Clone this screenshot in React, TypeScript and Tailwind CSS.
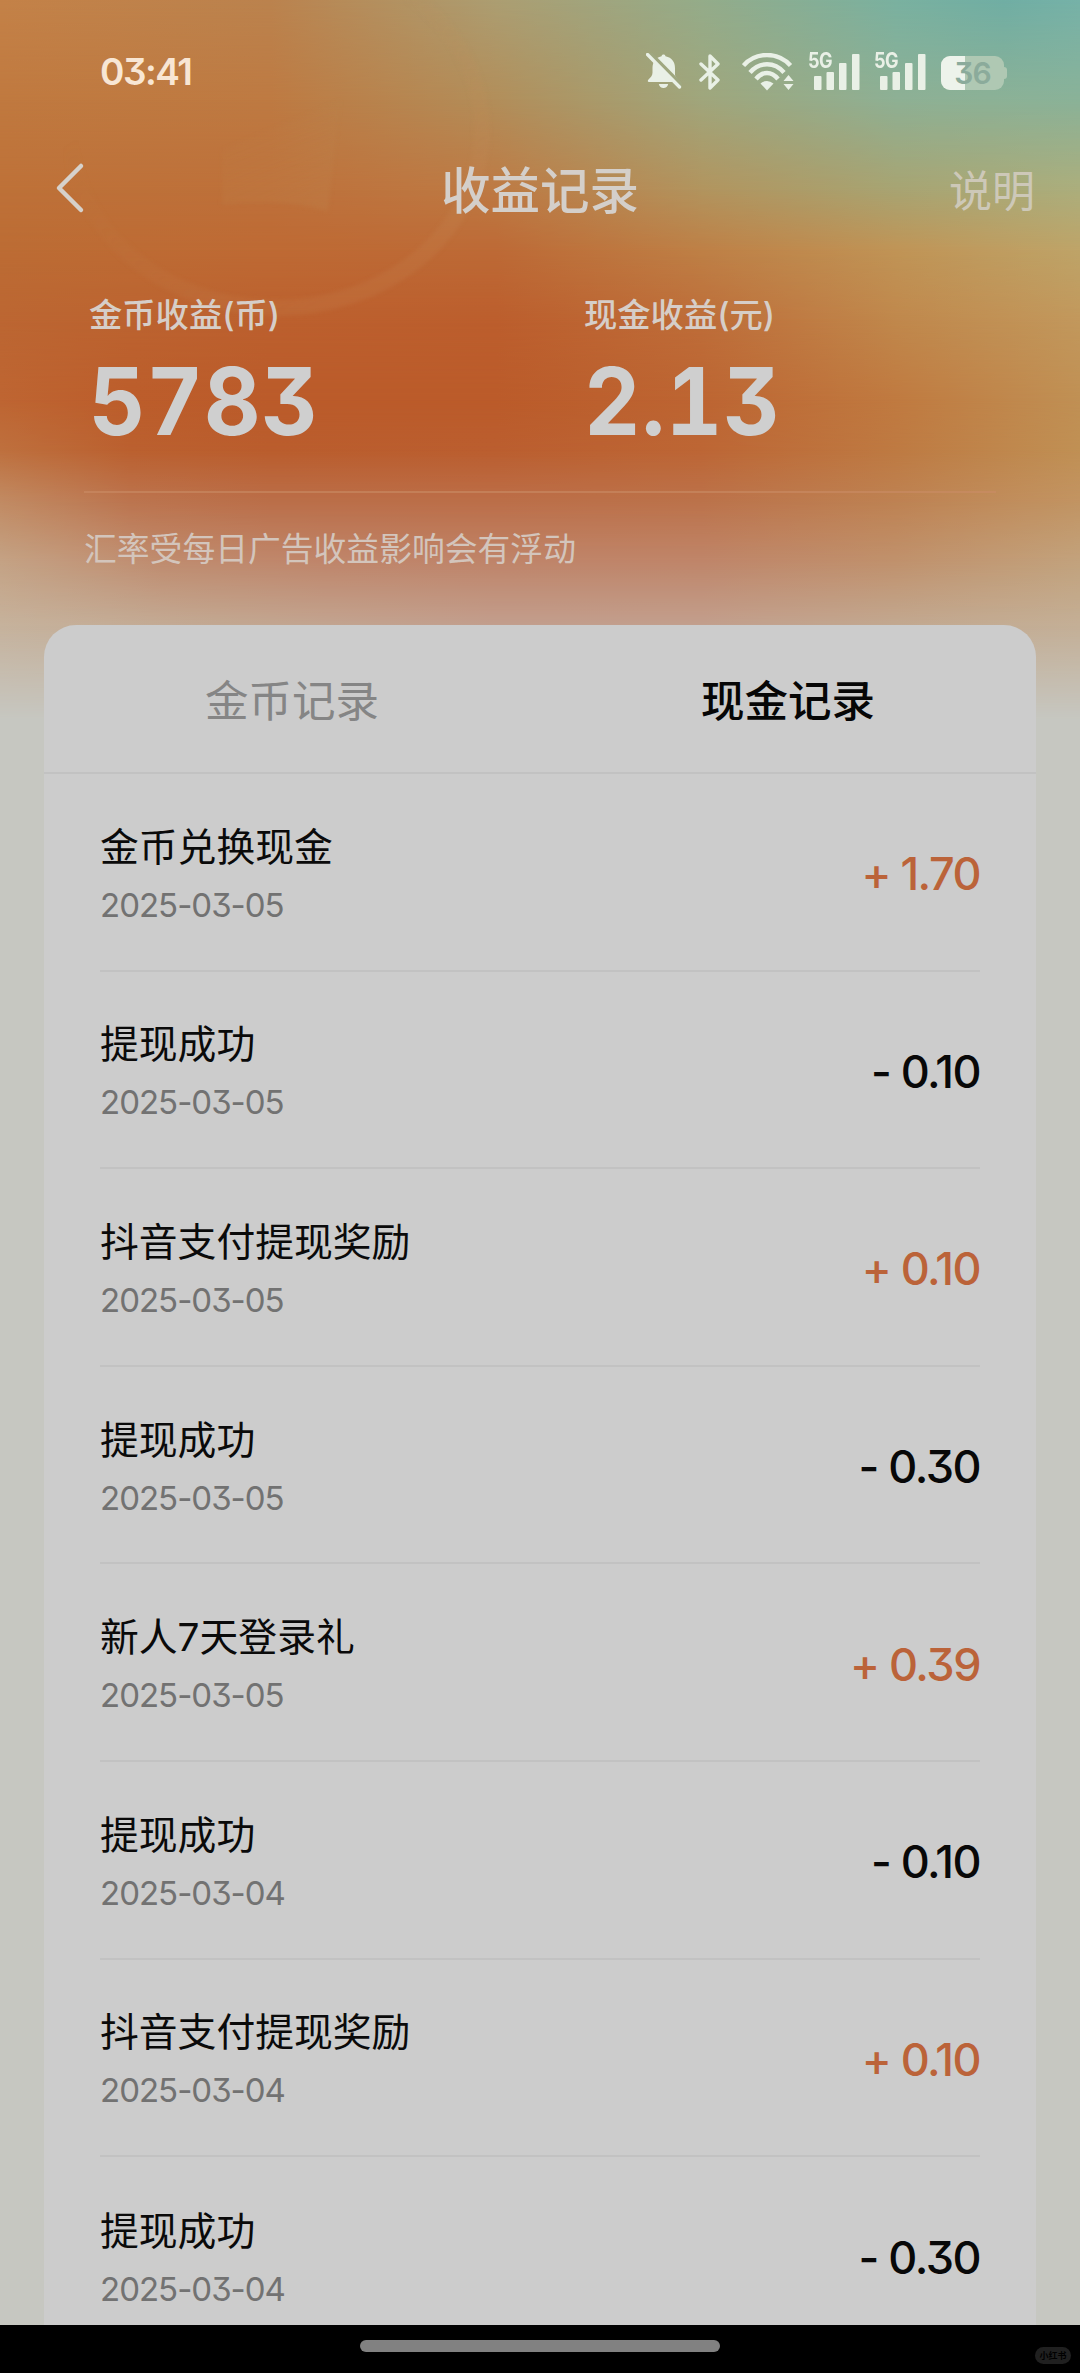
import React from "react";

type RecordItem = { title: string; date: string; amount: string };

const records: RecordItem[] = [
  { title: "金币兑换现金", date: "2025-03-05", amount: "+ 1.70" },
  { title: "提现成功", date: "2025-03-05", amount: "- 0.10" },
  { title: "抖音支付提现奖励", date: "2025-03-05", amount: "+ 0.10" },
  { title: "提现成功", date: "2025-03-05", amount: "- 0.30" },
  { title: "新人7天登录礼", date: "2025-03-05", amount: "+ 0.39" },
  { title: "提现成功", date: "2025-03-04", amount: "- 0.10" },
  { title: "抖音支付提现奖励", date: "2025-03-04", amount: "+ 0.10" },
  { title: "提现成功", date: "2025-03-04", amount: "- 0.30" },
];

// Stacked horizontal gradients, each faded in vertically over the one before it.
const meshLayers: string[] = [
  "bg-[linear-gradient(90deg,rgb(196,130,72)_0%,rgb(187,131,78)_25%,rgb(172,158,114)_46%,rgb(148,172,138)_65%,rgb(122,177,160)_83%,rgb(112,174,164)_93%,rgb(118,178,168)_100%)]",
  "bg-[linear-gradient(90deg,rgb(192,121,63)_0%,rgb(190,122,66)_25%,rgb(178,142,90)_46%,rgb(160,166,124)_65%,rgb(142,176,148)_83%,rgb(138,178,152)_100%)] [mask-image:linear-gradient(180deg,transparent_0px,black_100px)]",
  "bg-[linear-gradient(90deg,rgb(190,113,56)_0%,rgb(190,112,58)_25%,rgb(190,122,68)_46%,rgb(178,148,94)_65%,rgb(168,164,114)_83%,rgb(172,174,124)_100%)] [mask-image:linear-gradient(180deg,transparent_100px,black_190px)]",
  "bg-[linear-gradient(90deg,rgb(188,108,52)_0%,rgb(190,106,52)_25%,rgb(189,106,54)_46%,rgb(190,128,70)_65%,rgb(192,148,86)_83%,rgb(190,164,104)_100%)] [mask-image:linear-gradient(180deg,transparent_190px,black_250px)]",
  "bg-[linear-gradient(90deg,rgb(188,102,50)_0%,rgb(188,96,46)_25%,rgb(188,94,45)_46%,rgb(190,109,57)_65%,rgb(192,136,76)_83%,rgb(194,152,92)_100%)] [mask-image:linear-gradient(180deg,transparent_250px,black_320px)]",
  "bg-[linear-gradient(90deg,rgb(190,101,50)_0%,rgb(188,93,43)_12%,rgb(187,91,42)_25%,rgb(187,91,42)_46%,rgb(189,101,50)_65%,rgb(192,122,64)_83%,rgb(192,144,84)_100%)] [mask-image:linear-gradient(180deg,transparent_320px,black_400px)]",
  "bg-[linear-gradient(90deg,rgb(190,112,62)_0%,rgb(187,96,47)_12%,rgb(186,93,45)_25%,rgb(187,94,47)_46%,rgb(189,102,53)_65%,rgb(190,122,66)_83%,rgb(192,144,84)_100%)] [mask-image:linear-gradient(180deg,transparent_400px,black_450px)]",
  "bg-[linear-gradient(90deg,rgb(193,138,98)_0%,rgb(188,116,78)_12%,rgb(187,110,72)_25%,rgb(188,110,72)_46%,rgb(188,114,74)_65%,rgb(190,130,82)_83%,rgb(194,148,98)_100%)] [mask-image:linear-gradient(180deg,transparent_450px,black_500px)]",
  "bg-[linear-gradient(90deg,rgb(196,162,132)_0%,rgb(191,139,110)_15%,rgb(191,133,106)_30%,rgb(191,132,105)_46%,rgb(191,133,105)_65%,rgb(192,145,108)_83%,rgb(194,162,124)_100%)] [mask-image:linear-gradient(180deg,transparent_500px,black_560px)]",
  "bg-[linear-gradient(90deg,rgb(198,178,156)_0%,rgb(194,168,146)_20%,rgb(194,158,141)_46%,rgb(194,159,141)_65%,rgb(194,168,144)_83%,rgb(196,175,150)_100%)] [mask-image:linear-gradient(180deg,transparent_560px,black_625px)]",
  "bg-[#c6c7c1] [mask-image:linear-gradient(180deg,transparent_625px,black_720px)]",
];

function MeshBackdrop() {
  return (
    <div className="absolute inset-0 bg-[#c6c7c1]">
      {meshLayers.map((layer, i) => (
        <div key={i} className={"absolute inset-x-0 top-0 h-[760px] " + layer} />
      ))}
      <svg className="absolute left-0 top-0 blur-[2px]" width="560" height="360" viewBox="0 0 560 360" fill="none">
        <defs>
          <linearGradient id="coin" x1="0.3" y1="0.3" x2="0.75" y2="0.9">
            <stop offset="0" stopColor="#c98f5c" stopOpacity="0" />
            <stop offset="1" stopColor="#c98f5c" stopOpacity="0.17" />
          </linearGradient>
          <linearGradient id="mark" x1="0.8" y1="1" x2="0.4" y2="0">
            <stop offset="0" stopColor="#c08a52" stopOpacity="0.24" />
            <stop offset="1" stopColor="#c08a52" stopOpacity="0.02" />
          </linearGradient>
        </defs>
        <ellipse cx="276" cy="130" rx="206" ry="178" stroke="url(#coin)" strokeWidth="16" />
        <path d="M340 100L328 211Q280 198 222 205V150Z" fill="url(#mark)" />
      </svg>
    </div>
  );
}

function BellOff() {
  return (
    <svg width="36" height="38" viewBox="0 0 36 38" fill="none">
      <path
        d="M17.500 1.500C18.500 1.500 19.200 2.200 19.500 3.200C26 4.500 29 9 29 15v6.500c0 2.500 3.500 4.500 3.500 7.500H3C1.500 29 1.500 27.500 2.500 26.500C5 24 6.500 22.500 6.500 19.500V15C6.500 9 9.500 4.500 15.500 3.200C15.800 2.200 16.500 1.500 17.500 1.500zM12.800 31h9.400c-.6 2.500-2.300 4-4.700 4s-4.100-1.500-4.700-4z"
        fill="#e9f0e6"
      />
      <path d="M3 -1L37 33.500" stroke="#9fa77f" strokeWidth="4" />
      <path d="M1.500 1.500L33.500 34" stroke="#e9f0e6" strokeWidth="3.300" strokeLinecap="round" />
    </svg>
  );
}

function BluetoothMark() {
  return (
    <svg width="22" height="38" viewBox="0 0 22 38" fill="none" stroke="#e9f0e6" strokeWidth="3.400" strokeLinejoin="round" strokeLinecap="round">
      <path d="M2 11L19 27L11 35V3L19 11L2 27" />
    </svg>
  );
}

function WifiMark() {
  return (
    <svg width="52" height="38" viewBox="0 0 52 38" fill="none">
      <g stroke="#e9f0e6" strokeWidth="4.400">
        <path d="M1.500 12.500C14-1.500 36-1.500 48.500 12.500" />
        <path d="M8 19.500C17.500 8.500 32.500 8.500 42 19.500" />
        <path d="M14 26C20.500 18 29.500 18 36 26" />
      </g>
      <path d="M18.500 30.500Q25 25.500 31.500 30.500L25 37.500Z" fill="#e9f0e6" />
      <path d="M46.500 22L51.500 28H41.500ZM46.500 37L51.500 31H41.500Z" fill="#e9f0e6" />
    </svg>
  );
}

function Signal() {
  return (
    <div className="relative h-[38px] w-[53px]">
      <svg width="53" height="38" viewBox="0 0 53 38" fill="#e9f0e6">
        <rect x="6" y="23" width="7.500" height="14" rx="1" />
        <rect x="18.500" y="19" width="7.500" height="18" rx="1" />
        <rect x="31" y="10" width="7.500" height="27" rx="1" />
        <rect x="44" y="1" width="7.500" height="36" rx="1" />
      </svg>
      <span className="absolute left-0 top-[-2px] origin-left scale-x-[0.86] text-[21px] font-bold leading-[20px] tracking-[-0.5px] text-[#e9f0e6]">
        5G
      </span>
    </div>
  );
}

function Battery() {
  return (
    <div className="flex items-center">
      <div className="relative flex h-[34px] w-[63px] items-center justify-center overflow-hidden rounded-[9px] bg-[#afc8b3]">
        <div className="absolute inset-y-0 left-0 w-[24px] bg-[#edf3eb]" />
        <span className="relative text-[30px] font-semibold leading-[34px] tracking-[-1px] text-[#8bab9b]">36</span>
      </div>
      <div className="h-3 w-[3px] rounded-r-[3px] bg-[#afc8b3]" />
    </div>
  );
}

function StatusBar() {
  return (
    <div className="flex h-[144px] shrink-0 items-center pl-[100px] pr-[73px]">
      <span className="text-[37px] font-semibold leading-[40px] tracking-[-1.500px] text-[#f8e6d4]">03:41</span>
      <div className="ml-auto flex items-center">
        <BellOff />
        <div className="ml-[17px]"><BluetoothMark /></div>
        <div className="ml-[21px]"><WifiMark /></div>
        <div className="ml-[14px]"><Signal /></div>
        <div className="ml-[13px]"><Signal /></div>
        <div className="ml-[14px] pt-[2px]"><Battery /></div>
      </div>
    </div>
  );
}

function Stat({ label, value }: { label: string; value: string }) {
  return (
    <div className="w-[495px]">
      <div className="text-[33.300px] font-medium leading-[40px] text-[#d6cec8]">{label}</div>
      <div className="mt-[16px] origin-left scale-x-[0.94] text-[93px] font-bold tabular-nums leading-[100px] tracking-[1px] text-[#cfcfcf]">{value}</div>
    </div>
  );
}

function Row({ item, last }: { item: RecordItem; last: boolean }) {
  const income = item.amount.startsWith("+");
  return (
    <div className={"mx-[56px] flex h-[197.600px] shrink-0 items-center justify-between" + (last ? "" : " border-b-2 border-[#c2c2c2]")}>
      <div className="pt-[9px]">
        <div className="text-[38.800px] leading-[58px] text-[#0a0a0a]">{item.title}</div>
        <div className="text-[33px] leading-[59px] tracking-[-1px] text-[#727272]">{item.date}</div>
      </div>
      <div className={"pt-[5px] text-[45px] font-medium leading-[60px] tracking-[-1.500px] " + (income ? "text-[#bb6339]" : "text-[#080808]")}>
        {item.amount}
      </div>
    </div>
  );
}

export default function App() {
  return (
    <div className="relative flex h-[2373px] w-[1080px] flex-col overflow-hidden font-['Inter','Noto_Sans_CJK_SC',sans-serif] [font-feature-settings:'cv09'_1]">
      <MeshBackdrop />

      <div className="relative flex h-[2325px] shrink-0 flex-col overflow-hidden">
        <StatusBar />

        <header className="grid h-[92px] shrink-0 grid-cols-3 items-center px-[45px]">
          <svg width="32" height="52" viewBox="0 0 32 52" fill="none" className="-mt-1 ml-[9px]">
            <path d="M27 4L5 26L27 48" stroke="#d6d1cb" strokeWidth="4.500" strokeLinecap="round" strokeLinejoin="round" />
          </svg>
          <h1 className="pt-[2px] text-center text-[49.500px] font-medium leading-[60px] text-[#d4cfca]">收益记录</h1>
          <span className="pt-[2px] text-right text-[43px] leading-[60px] text-[#cdc8b8]">说明</span>
        </header>

        <section className="mt-[59px] flex shrink-0 pl-[89px]">
          <Stat label="金币收益(币)" value="5783" />
          <Stat label="现金收益(元)" value="2.13" />
        </section>

        <div className="mx-[84px] mt-[40px] h-[2px] shrink-0 bg-[#c98c66]/60" />
        <p className="ml-[84px] mt-[31px] h-[51px] shrink-0 text-[32.800px] leading-[50px] text-[#d3c5bc]">汇率受每日广告收益影响会有浮动</p>

        <main className="mx-[44px] mt-[50px] flex shrink-0 flex-col rounded-t-[32px] bg-[#cccccc]">
          <div className="flex h-[149px] shrink-0 items-center border-b-2 border-[#c2c2c2] pt-[4px] text-[43.500px] leading-[60px]">
            <div className="flex-1 text-center text-[#858585]">金币记录</div>
            <div className="flex-1 text-center font-medium text-[#060606]">现金记录</div>
          </div>
          {records.map((item, i) => (
            <Row key={i} item={item} last={i === records.length - 1} />
          ))}
        </main>
      </div>

      <footer className="relative h-12 shrink-0 bg-black">
        <div className="mx-auto h-[27px] w-[360px] pt-[15px]">
          <div className="h-3 rounded-full bg-[#818181]" />
        </div>
        <div className="absolute right-[9px] top-[22px] flex h-[17px] w-[36px] items-center justify-center rounded-full bg-[#202020] text-[9px] font-bold leading-none text-black">
          小红书
        </div>
      </footer>
    </div>
  );
}
